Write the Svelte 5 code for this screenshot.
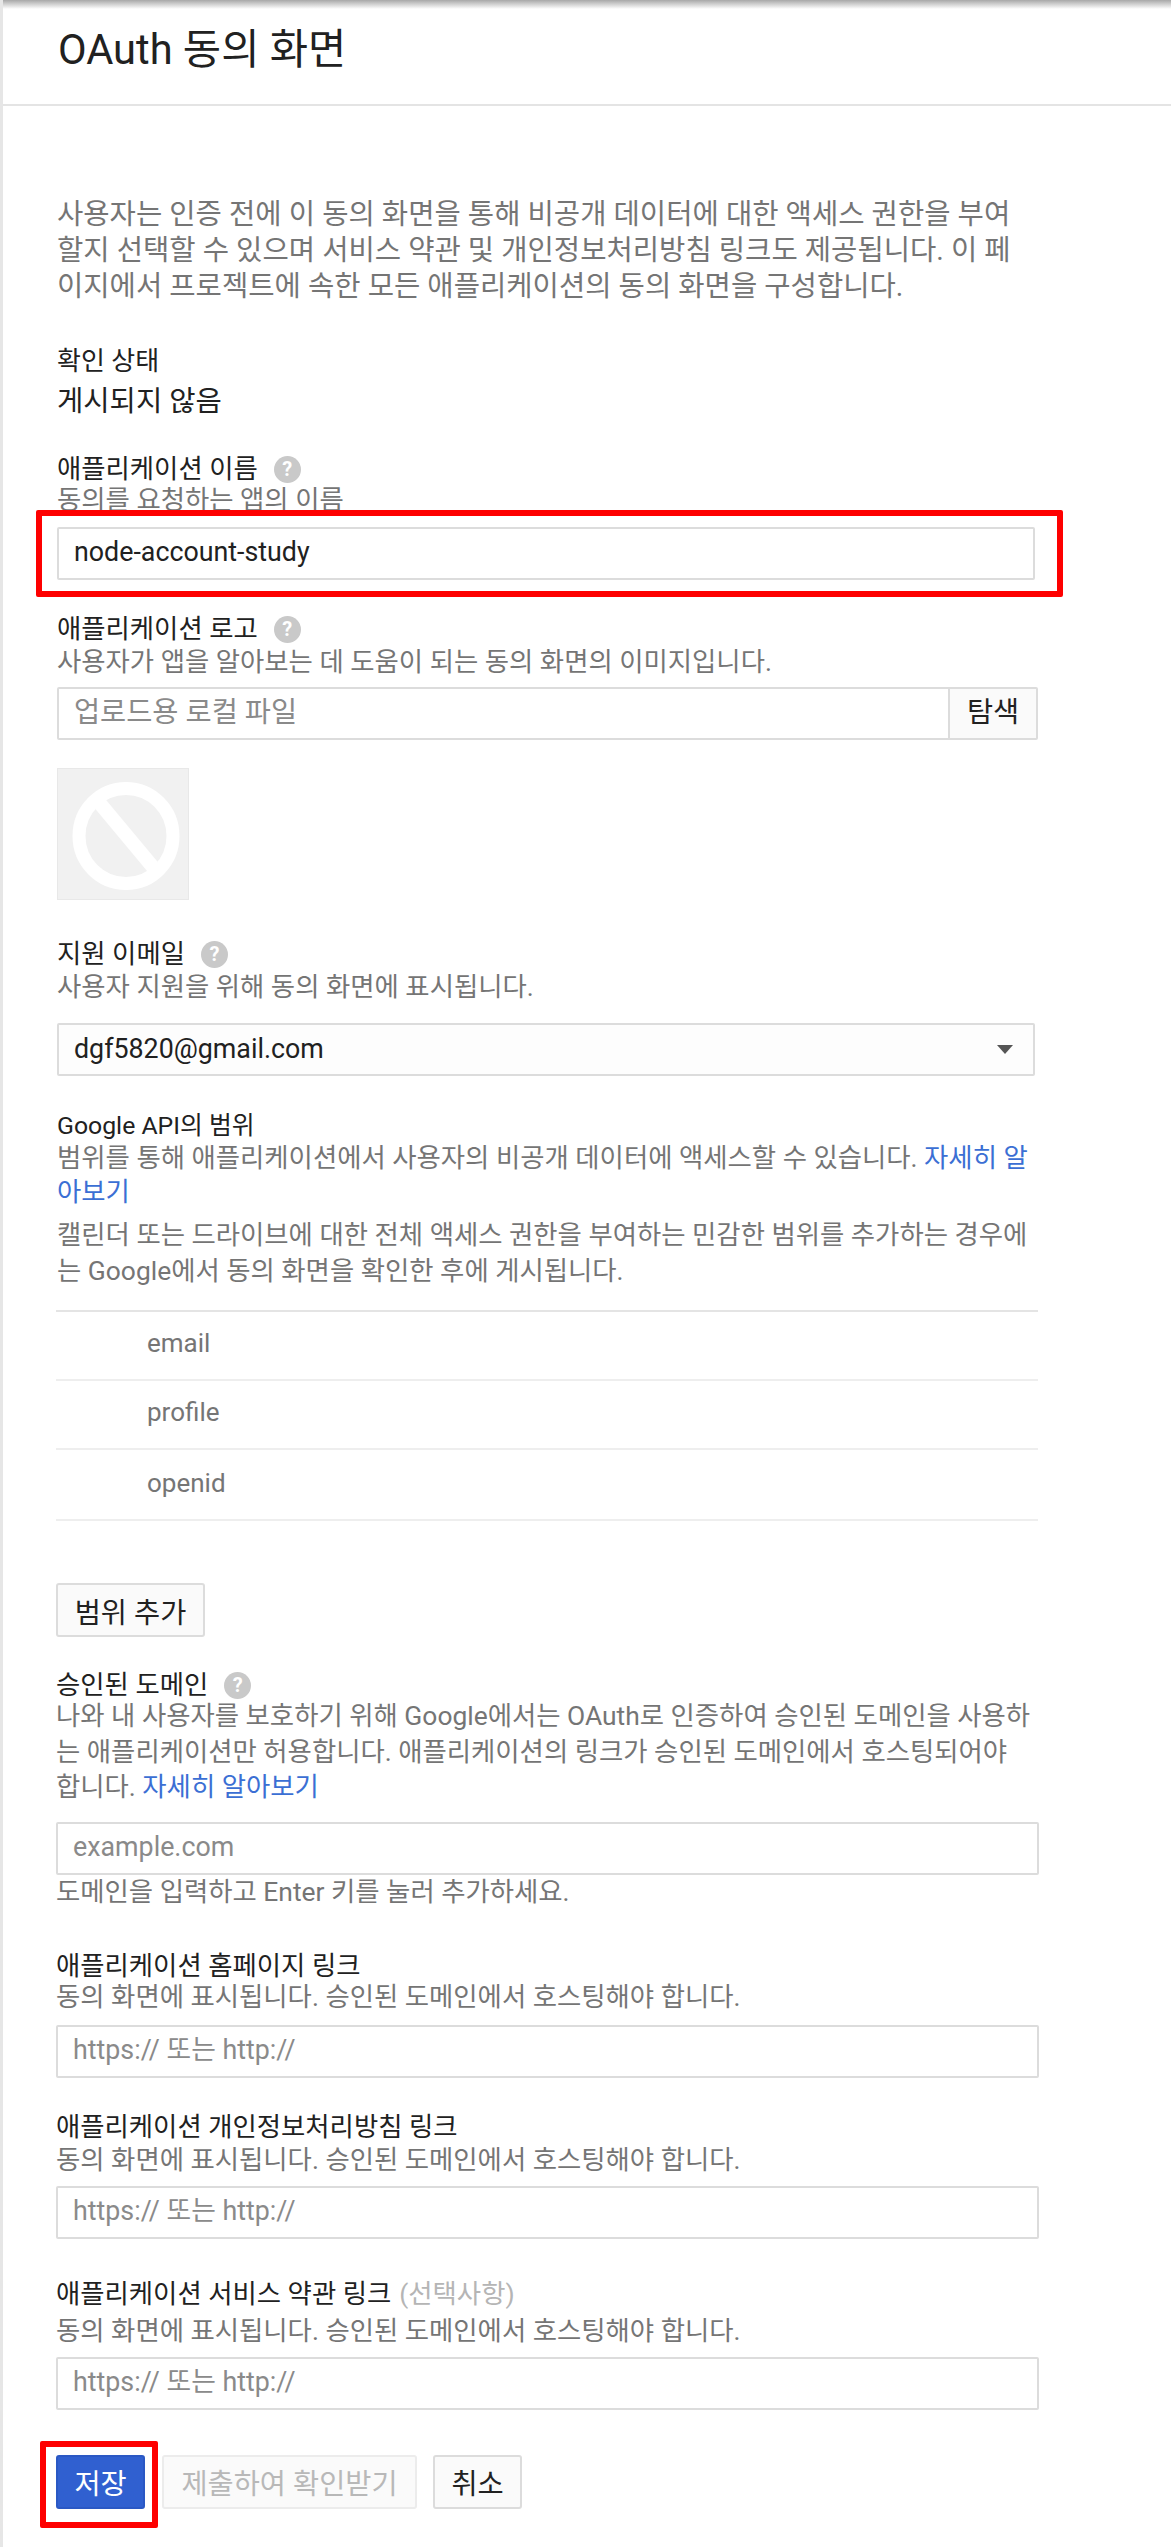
<script>
  const scopes = ["email", "profile", "openid"];
</script>

<div class="page">
  <header>
    <h1>OAuth 동의 화면</h1>
  </header>

  <main>
    <p class="intro">
      사용자는 인증 전에 이 동의 화면을 통해 비공개 데이터에 대한 액세스 권한을 부여<br />할지 선택할 수 있으며 서비스 약관 및 개인정보처리방침 링크도 제공됩니다. 이 페<br />이지에서 프로젝트에 속한 모든 애플리케이션의 동의 화면을 구성합니다.
    </p>

    <div class="status">
      <div>확인 상태</div>
      <div class="status-value">게시되지 않음</div>
    </div>

    <div class="label name-label">애플리케이션 이름 <span class="help">?</span></div>
    <div class="hint name-hint">동의를 요청하는 앱의 이름</div>
    <div class="name-box">
      <div class="input value">node-account-study</div>
    </div>

    <div class="label logo-label">애플리케이션 로고 <span class="help">?</span></div>
    <div class="hint">사용자가 앱을 알아보는 데 도움이 되는 동의 화면의 이미지입니다.</div>
    <div class="file">
      <span class="file-name">업로드용 로컬 파일</span>
      <span class="file-btn">탐색</span>
    </div>
    <div class="logo">
      <svg viewBox="0 0 132 132" width="132" height="132">
        <ellipse cx="69" cy="68" rx="47" ry="47.5" fill="none" stroke="#fff" stroke-width="13" />
        <path d="M40 32 L100 104" stroke="#fff" stroke-width="14" />
      </svg>
    </div>

    <div class="label support-label">지원 이메일 <span class="help">?</span></div>
    <div class="hint">사용자 지원을 위해 동의 화면에 표시됩니다.</div>
    <div class="input select value">
      dgf5820@gmail.com
      <span class="caret"></span>
    </div>

    <div class="label scope-label">Google API의 범위</div>
    <p class="desc scope-desc">
      범위를 통해 애플리케이션에서 사용자의 비공개 데이터에 액세스할 수 있습니다. <a href="#top">자세히 알<br />아보기</a>
    </p>
    <p class="desc scope-note">
      캘린더 또는 드라이브에 대한 전체 액세스 권한을 부여하는 민감한 범위를 추가하는 경우에<br />는 Google에서 동의 화면을 확인한 후에 게시됩니다.
    </p>

    <ul class="scopes">
      {#each scopes as scope}
        <li>{scope}</li>
      {/each}
    </ul>

    <button class="btn add">범위 추가</button>

    <div class="lower">
      <div class="label domain-label">승인된 도메인 <span class="help">?</span></div>
      <p class="desc domain-desc">
        나와 내 사용자를 보호하기 위해 Google에서는 OAuth로 인증하여 승인된 도메인을 사용하<br />는 애플리케이션만 허용합니다. 애플리케이션의 링크가 승인된 도메인에서 호스팅되어야<br />합니다. <a href="#top">자세히 알아보기</a>
      </p>
      <div class="input wide placeholder domain-input">example.com</div>
      <div class="hint">도메인을 입력하고 Enter 키를 눌러 추가하세요.</div>

      <div class="label home-label">애플리케이션 홈페이지 링크</div>
      <div class="hint home-hint">동의 화면에 표시됩니다. 승인된 도메인에서 호스팅해야 합니다.</div>
      <div class="input wide placeholder home-input">https:// 또는 http://</div>

      <div class="label privacy-label">애플리케이션 개인정보처리방침 링크</div>
      <div class="hint">동의 화면에 표시됩니다. 승인된 도메인에서 호스팅해야 합니다.</div>
      <div class="input wide placeholder link-input">https:// 또는 http://</div>

      <div class="label terms-label">애플리케이션 서비스 약관 링크 <span class="optional">(선택사항)</span></div>
      <div class="hint terms-hint">동의 화면에 표시됩니다. 승인된 도메인에서 호스팅해야 합니다.</div>
      <div class="input wide placeholder link-input">https:// 또는 http://</div>

      <div class="actions">
        <div class="save-box">
          <button class="btn primary">저장</button>
        </div>
        <button class="btn disabled">제출하여 확인받기</button>
        <button class="btn cancel">취소</button>
      </div>
    </div>
  </main>
</div>

<style>
  :global(body) {
    background: #fff;
  }

  .page {
    width: 1171px;
    height: 2547px;
    box-sizing: border-box;
    border-left: 3px solid #e6e6e6;
    overflow: hidden;
    font-family: Roboto, "Noto Sans CJK KR", sans-serif;
    font-size: 26.4px;
    color: #212121;
    background: linear-gradient(#a8a8a8, #fff 9px);
  }

  header {
    height: 106px;
    box-sizing: border-box;
    padding: 26px 0 0 55px;
    border-bottom: 2px solid #e4e4e4;
  }

  h1 {
    margin: 0;
    font-size: 41.6px;
    font-weight: 400;
    line-height: 48px;
    color: #212121;
  }

  main {
    padding-left: 54px;
  }

  p {
    margin: 0;
  }

  .intro {
    margin-top: 90px;
    font-size: 28.6px;
    line-height: 36px;
    color: #757575;
    white-space: nowrap;
  }

  .status {
    margin-top: 37px;
    font-size: 26px;
    line-height: 40px;
  }

  .status-value {
    font-size: 28.6px;
  }

  .label {
    height: 32px;
    line-height: 32px;
    display: flex;
    align-items: center;
    gap: 16px;
    white-space: nowrap;
  }

  .hint {
    height: 34px;
    line-height: 34px;
    color: #757575;
    white-space: nowrap;
  }

  .desc {
    color: #757575;
    line-height: 34px;
    white-space: nowrap;
  }

  a {
    color: #3b6fd4;
    text-decoration: none;
  }

  .help {
    width: 27px;
    height: 27px;
    border-radius: 50%;
    background: #c9c9c9;
    color: #fff;
    font-size: 20px;
    font-weight: 700;
    line-height: 27px;
    text-align: center;
  }

  .optional {
    margin-left: -8px;
    color: #b5b5b5;
  }

  .input {
    box-sizing: border-box;
    width: 978px;
    height: 53px;
    padding: 0 15px;
    font-size: 26.8px;
    line-height: 47px;
    border: 2px solid #dcdcdc;
    border-radius: 2px;
    background: #fff;
  }

  .input.wide {
    width: 983px;
  }

  .value {
    color: #212121;
  }

  .placeholder {
    color: #8a8a8a;
  }

  .name-label {
    margin-top: 32px;
  }

  .name-hint {
    height: 30px;
    line-height: 30px;
  }

  .name-box {
    position: relative;
    box-sizing: border-box;
    width: 1027px;
    margin: -5px 0 0 -21px;
    padding: 11px 22px 11px 15px;
    border: 6px solid #fe0000;
    border-radius: 2px;
    background: #fff;
  }

  .logo-label {
    margin-top: 16px;
  }

  .file {
    display: flex;
    box-sizing: border-box;
    width: 981px;
    height: 53px;
    margin-top: 8px;
    border: 2px solid #dcdcdc;
    border-radius: 2px;
    font-size: 28.4px;
    line-height: 47px;
  }

  .file-name {
    flex: 1;
    padding-left: 15px;
    color: #8a8a8a;
  }

  .file-btn {
    width: 86px;
    text-align: center;
    border-left: 2px solid #dcdcdc;
    background: #fafafa;
  }

  .logo {
    width: 132px;
    height: 132px;
    margin-top: 28px;
    background: #f1f1f1;
    box-shadow: inset 0 0 0 1px #e8e8e8;
  }

  .logo svg {
    display: block;
  }

  .support-label {
    margin-top: 38px;
  }

  .support-label + .hint {
    margin-bottom: 19px;
  }

  .select {
    display: flex;
    align-items: center;
    justify-content: space-between;
    padding-right: 20px;
    background: #fdfdfd;
  }

  .caret {
    width: 0;
    height: 0;
    border-left: 8px solid transparent;
    border-right: 8px solid transparent;
    border-top: 9px solid #555;
  }

  .scope-label {
    margin-top: 34px;
    font-size: 24.8px;
  }

  .scope-desc {
    margin-top: -1px;
  }

  .scope-note {
    margin-top: 8px;
    line-height: 36px;
  }

  .scopes {
    list-style: none;
    width: 982px;
    margin: 21px 0 0 -1px;
    padding: 0;
    border-top: 2px solid #e4e4e4;
    color: #757575;
    font-size: 26px;
  }

  .scopes li {
    height: 67px;
    padding-left: 91px;
    line-height: 63px;
    border-bottom: 2px solid #eeeeee;
  }

  .scopes li:last-child {
    height: 69px;
    line-height: 67px;
  }

  .btn {
    box-sizing: border-box;
    height: 54px;
    padding: 0;
    font: inherit;
    font-size: 28.4px;
    border-radius: 3px;
    border: 2px solid #dcdcdc;
    background: #fafafa;
    color: #212121;
  }

  .add {
    display: block;
    width: 149px;
    margin: 62px 0 0 -1px;
  }

  .lower {
    margin-left: -1px;
  }

  .domain-label {
    margin-top: 32px;
  }

  .domain-desc {
    margin-top: -2px;
    line-height: 35.5px;
  }

  .domain-input {
    margin-top: 16px;
  }

  .home-label {
    margin-top: 41px;
  }

  .home-hint {
    margin-top: -2px;
  }

  .home-input {
    margin-top: 11px;
  }

  .privacy-label {
    margin-top: 33px;
  }

  .terms-label {
    margin-top: 39px;
  }

  .terms-hint {
    margin-top: 4px;
  }

  .link-input {
    margin-top: 9px;
  }

  .actions {
    display: flex;
    align-items: flex-start;
    margin: 31px 0 0 -16px;
  }

  .save-box {
    box-sizing: border-box;
    width: 118px;
    height: 87px;
    padding: 8px 0 0 10px;
    border: 6px solid #fe0000;
    border-radius: 2px;
  }

  .primary {
    width: 89px;
    color: #fff;
    background: #3060d0;
    border-color: #2a58c4;
  }

  .disabled {
    width: 255px;
    margin: 14px 0 0 4px;
    color: #b8b8b8;
    border-color: #ececec;
  }

  .cancel {
    width: 89px;
    margin: 14px 0 0 16px;
  }
</style>
